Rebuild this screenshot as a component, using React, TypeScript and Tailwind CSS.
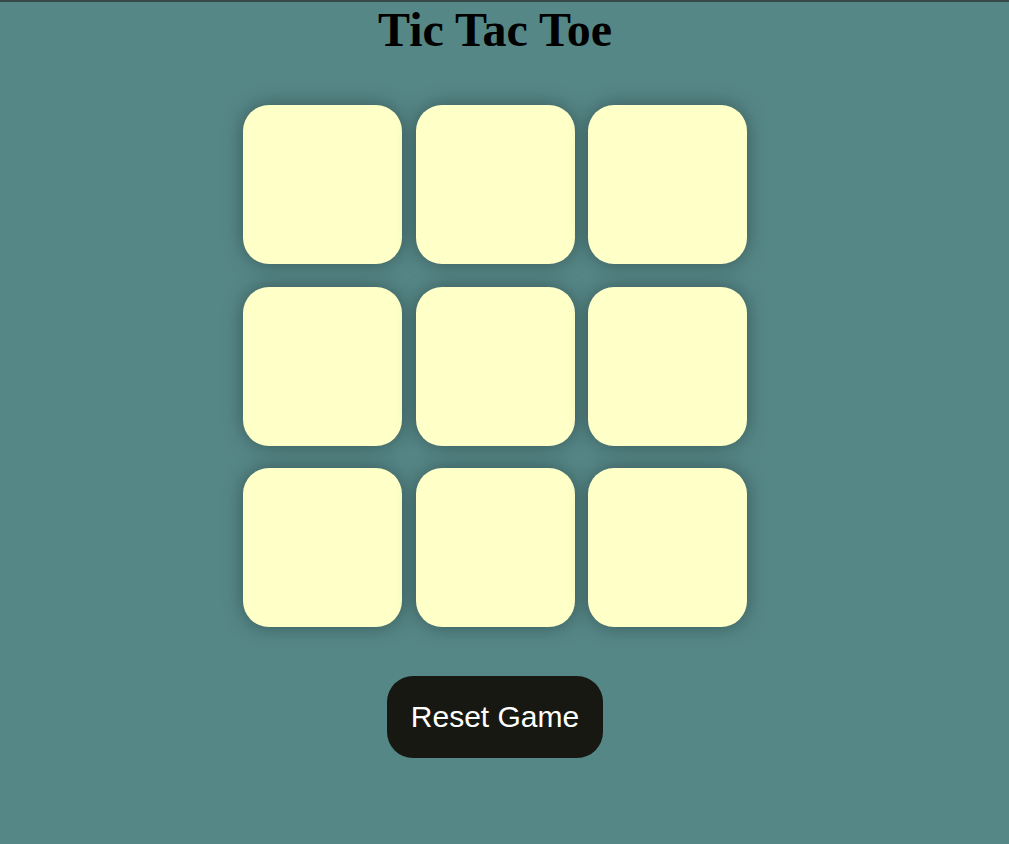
import React from "react";

const cells = Array.from({ length: 9 }, (_, i) => i);

const App: React.FC = () => {
  return (
    <div className="min-h-[844px] bg-[#568787] border-t-2 border-[#364848]">
      <div className="w-[990px] flex flex-col items-center">
        <h1 className="m-0 pt-px text-[48px] leading-[53px] font-bold text-black font-['Liberation_Serif',serif]">
          Tic Tac Toe
        </h1>
        <div className="mt-[49px] grid grid-cols-[repeat(3,159px)] gap-x-[13.5px] gap-y-[22.5px]">
          {cells.map((i) => (
            <div
              key={i}
              className="w-[159px] h-[159px] rounded-[26px] bg-[#ffffc8] shadow-[0_0_20px_rgba(0,0,0,0.35)]"
            />
          ))}
        </div>
        <button className="mt-[49px] h-[82px] pb-px px-[24px] rounded-[26px] bg-[#181812] text-white text-[30px] font-['Liberation_Sans',Arial,sans-serif]">
          Reset Game
        </button>
      </div>
    </div>
  );
};

export default App;
